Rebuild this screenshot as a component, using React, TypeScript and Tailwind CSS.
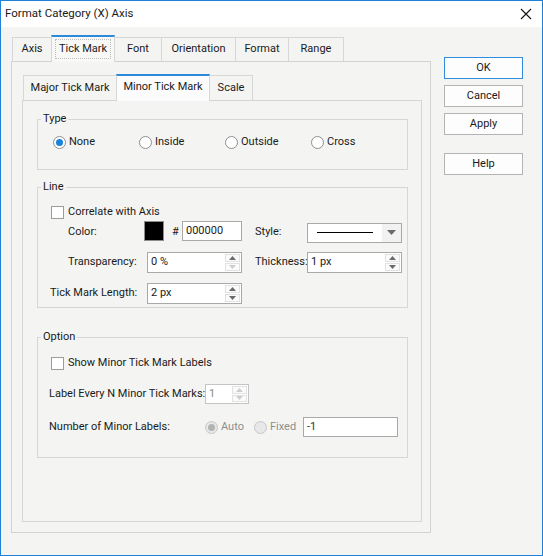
import React from "react";

function Radio({ checked, disabled }: { checked?: boolean; disabled?: boolean }) {
  return (
    <span
      className={
        disabled
          ? "flex h-[13px] w-[13px] shrink-0 items-center justify-center rounded-full border border-[#c6c6c6] bg-[#e8e8e8]"
          : "flex h-[13px] w-[13px] shrink-0 items-center justify-center rounded-full border border-[#8f8f8f] bg-white"
      }
    >
      {checked && (
        <span
          className={
            disabled
              ? "h-[7px] w-[7px] rounded-full bg-[#b3b3b3]"
              : "h-[7px] w-[7px] rounded-full bg-[#1a82d9]"
          }
        />
      )}
    </span>
  );
}

function Check() {
  return <span className="h-[13px] w-[13px] shrink-0 border border-[#9c9c9c] bg-white" />;
}

function Tri({ up, dim }: { up?: boolean; dim?: boolean }) {
  return (
    <svg width="7" height="4" viewBox="0 0 7 4">
      <path d={up ? "M0 4 L3.5 0 L7 4Z" : "M0 0 L7 0 L3.5 4Z"} fill={dim ? "#cdcdcd" : "#6a6a6a"} />
    </svg>
  );
}

function Spin({
  value,
  className,
  upDim,
  downDim,
  disabled,
}: {
  value: string;
  className: string;
  upDim?: boolean;
  downDim?: boolean;
  disabled?: boolean;
}) {
  return (
    <div
      className={
        (disabled
          ? "flex border border-[#c4c4c4] bg-white text-[#8a8a8a] "
          : "flex border border-[#a9a9a9] bg-white text-[#1a1a1a] ") + className
      }
    >
      <div className="flex flex-1 items-center whitespace-nowrap pl-[3px]">{value}</div>
      <div className="my-[1px] mr-[1px] flex w-[15px] flex-col gap-[1px]">
        <div className="flex flex-1 items-center justify-center border border-[#e2e2e2] bg-[#fbfbfb]">
          <Tri up dim={upDim || disabled} />
        </div>
        <div className="flex flex-1 items-center justify-center border border-[#e2e2e2] bg-[#fbfbfb]">
          <Tri dim={downDim || disabled} />
        </div>
      </div>
    </div>
  );
}

function Btn({ label, primary }: { label: string; primary?: boolean }) {
  return (
    <div
      className={
        primary
          ? "flex h-[22px] w-[79px] items-center justify-center border border-[#2f8ce0] bg-[#fdfdfd]"
          : "flex h-[22px] w-[79px] items-center justify-center border border-[#b4b4b4] bg-[#fdfdfd]"
      }
    >
      {label}
    </div>
  );
}

export default function App() {
  return (
    <div className="flex h-[556px] w-[543px] flex-col whitespace-nowrap border border-[#1f80d7] font-['Roboto',sans-serif] text-[11px] text-[#1a1a1a]">
      {/* Title bar */}
      <div className="flex h-[26px] shrink-0 items-center justify-between bg-white pl-[4px] pr-[10px]">
        <span className="text-[11.5px]">Format Category (X) Axis</span>
        <svg width="12" height="12" viewBox="0 0 12 12">
          <path d="M1 1 L11 11 M11 1 L1 11" stroke="#111" strokeWidth="1.1" />
        </svg>
      </div>

      {/* Body */}
      <div className="flex flex-1 bg-[#f4f5f3] pl-[10px] pt-[8px]">
        {/* Left column */}
        <div className="flex w-[420px] flex-col">
          {/* Outer tabs */}
          <div className="flex h-[26px] items-end pl-[1px]">
            <div className="flex h-[24px] w-[40px] items-center justify-center border-x border-t border-[#d7d7d7]">
              Axis
            </div>
            <div className="relative z-10 -mb-px -ml-px flex h-[27px] w-[64px] items-center justify-center border-x border-t-2 border-x-[#d7d7d7] border-t-[#2b8ad9] bg-[#f8f8f7] pb-[2px]">
              <span className="border border-dotted border-[#bdbdbd] px-[3px] leading-[18px]">Tick Mark</span>
            </div>
            <div className="-ml-px flex h-[24px] w-[48px] items-center justify-center border-x border-t border-[#d7d7d7]">
              Font
            </div>
            <div className="-ml-px flex h-[24px] w-[75px] items-center justify-center border-x border-t border-[#d7d7d7]">
              Orientation
            </div>
            <div className="-ml-px flex h-[24px] w-[54px] items-center justify-center border-x border-t border-[#d7d7d7]">
              Format
            </div>
            <div className="-ml-px flex h-[24px] w-[56px] items-center justify-center border-x border-t border-[#d7d7d7]">
              Range
            </div>
          </div>

          {/* Outer panel */}
          <div className="flex h-[472px] flex-col border border-[#d3d3d1] pb-[10px] pl-[10px] pr-[8px] pt-[12px]">
            {/* Inner tabs */}
            <div className="flex h-[26px] items-end pl-[1px]">
              <div className="flex h-[25px] w-[94px] items-center justify-center border-x border-t border-[#d7d7d7]">
                Major Tick Mark
              </div>
              <div className="relative z-10 -mb-px -ml-px flex h-[27px] w-[94px] items-center justify-center border-x border-t-2 border-x-[#d7d7d7] border-t-[#2b8ad9] bg-[#fcfcfc] pb-[3px]">
                Minor Tick Mark
              </div>
              <div className="-ml-px flex h-[25px] w-[44px] items-center justify-center border-x border-t border-[#d7d7d7]">
                Scale
              </div>
            </div>

            {/* Inner panel */}
            <div className="flex flex-1 flex-col border border-[#d5d5d3] pl-[14px] pr-[13px] pt-[10px]">
              {/* Type */}
              <fieldset className="border border-[#d6d6d4]">
                <legend className="ml-[3px] px-[2px] leading-[16px]">Type</legend>
                <div className="mt-[7px] flex h-[16px] items-center pl-[15px]">
                  <div className="flex w-[86px] items-center gap-[3px]">
                    <Radio checked />
                    <span>None</span>
                  </div>
                  <div className="flex w-[86px] items-center gap-[3px]">
                    <Radio />
                    <span>Inside</span>
                  </div>
                  <div className="flex w-[86px] items-center gap-[3px]">
                    <Radio />
                    <span>Outside</span>
                  </div>
                  <div className="flex w-[86px] items-center gap-[3px]">
                    <Radio />
                    <span>Cross</span>
                  </div>
                </div>
                <div className="h-[19px]" />
              </fieldset>

              {/* Line */}
              <fieldset className="mt-[9px] border border-[#d6d6d4] pb-[3px]">
                <legend className="ml-[3px] px-[2px] leading-[16px]">Line</legend>
                <div className="mt-[9px] flex h-[16px] items-center gap-[4px] pl-[13px]">
                  <Check />
                  <span>Correlate with Axis</span>
                </div>
                <div className="mt-[2px] flex h-[20px] items-center pl-[30px]">
                  <span className="w-[76px]">Color:</span>
                  <span className="-mt-[3px] h-[20px] w-[20px] border border-[#8c8c8c] bg-black" />
                  <span className="ml-[8px] w-[10px]">#</span>
                  <div className="-mt-[2px] flex h-[20px] w-[60px] items-center border border-[#a9a9a9] bg-white pl-[3px]">
                    000000
                  </div>
                  <span className="ml-[13px] w-[52px]">Style:</span>
                  <div className="mt-[1px] flex h-[20px] w-[95px] border border-[#a9a9a9] bg-white">
                    <div className="flex flex-1 items-center pl-[9px]">
                      <div className="h-px w-[56px] bg-black" />
                    </div>
                    <div className="flex w-[19px] items-center justify-center bg-[#f2f2f2]">
                      <svg width="9" height="5" viewBox="0 0 9 5">
                        <path d="M0 0 L9 0 L4.5 5Z" fill="#6b6b6b" />
                      </svg>
                    </div>
                  </div>
                </div>
                <div className="mt-[10px] flex h-[21px] items-center pl-[30px]">
                  <span className="w-[79px]">Transparency:</span>
                  <Spin value="0 %" className="h-[21px] w-[95px]" downDim />
                  <span className="ml-[13px] w-[52px]">Thickness:</span>
                  <Spin value="1 px" className="h-[21px] w-[95px]" />
                </div>
                <div className="mt-[10px] flex h-[21px] items-center pl-[12px]">
                  <span className="w-[97px]">Tick Mark Length:</span>
                  <Spin value="2 px" className="h-[21px] w-[95px]" />
                </div>
              </fieldset>

              {/* Option */}
              <fieldset className="mt-[21px] border border-[#d6d6d4] pb-[20px]">
                <legend className="ml-[3px] px-[2px] leading-[16px]">Option</legend>
                <div className="mt-[10px] flex h-[16px] items-center gap-[4px] pl-[13px]">
                  <Check />
                  <span>Show Minor Tick Mark Labels</span>
                </div>
                <div className="mt-[13px] flex h-[20px] items-center pl-[11px]">
                  <span className="w-[156px]">Label Every N Minor Tick Marks:</span>
                  <Spin value="1" className="h-[20px] w-[44px]" disabled />
                </div>
                <div className="mt-[13px] flex h-[20px] items-center pl-[11px]">
                  <span className="w-[156px]">Number of Minor Labels:</span>
                  <div className="flex w-[49px] items-center gap-[3px] text-[#8d8d8d]">
                    <Radio checked disabled />
                    <span>Auto</span>
                  </div>
                  <div className="flex w-[49px] items-center gap-[3px] text-[#8d8d8d]">
                    <Radio disabled />
                    <span>Fixed</span>
                  </div>
                  <div className="flex h-[20px] w-[95px] items-center border border-[#a9a9a9] bg-white pl-[3px] text-[#333]">
                    -1
                  </div>
                </div>
              </fieldset>
            </div>
          </div>
        </div>

        {/* Right column */}
        <div className="ml-[13px] flex flex-col pt-[22px]">
          <Btn label="OK" primary />
          <div className="mt-[6px]">
            <Btn label="Cancel" />
          </div>
          <div className="mt-[6px]">
            <Btn label="Apply" />
          </div>
          <div className="mt-[18px]">
            <Btn label="Help" />
          </div>
        </div>
      </div>
    </div>
  );
}
